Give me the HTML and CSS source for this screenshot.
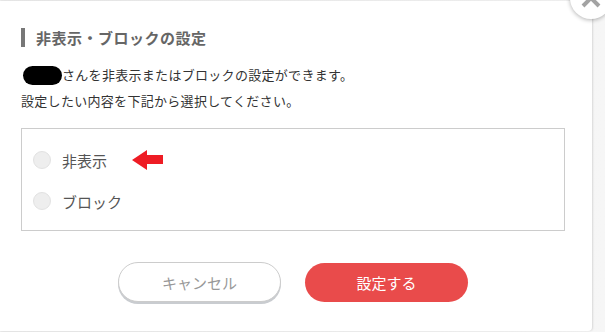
FILE: index.html
```html
<!DOCTYPE html>
<html lang="ja">

<head>
    <meta charset="UTF-8" />
    <meta name="viewport" content="width=device-width, initial-scale=1.0" />
    <title>非表示・ブロックの設定</title>
    <link rel="stylesheet" href="styles.css">
</head>

<body>

    <div class="modal">
        <div class="close-btn">
            <svg width="20" height="20" viewBox="0 0 20 20">
                <path d="M2 2 L18 18 M18 2 L2 18" stroke="#a3a3a3" stroke-width="4" fill="none" />
            </svg>
        </div>

        <h2 class="modal-title">非表示・ブロックの設定</h2>

        <p class="modal-text">
            <span class="masked"></span>さんを非表示またはブロックの設定ができます。<br>
            設定したい内容を下記から選択してください。
        </p>

        <div class="options">
            <label class="option">
                <span class="radio"></span>
                <span class="option-label">非表示</span>
                <svg class="pointer" width="31" height="20" viewBox="0 0 31 20">
                    <polygon points="0,10 15,0 15,5 31,5 31,14 15,14 15,20" fill="#ee1c24" />
                </svg>
            </label>
            <label class="option">
                <span class="radio"></span>
                <span class="option-label">ブロック</span>
            </label>
        </div>

        <div class="actions">
            <button class="btn btn-cancel">キャンセル</button>
            <button class="btn btn-submit">設定する</button>
        </div>
    </div>

</body>

</html>
```

FILE: styles.css
```css
body {
    margin: 0;
    font-family: "Noto Sans CJK JP", "Noto Sans", sans-serif;
    background: linear-gradient(to right, #ececec, #f6f6f6);
    height: 332px;
    overflow: hidden;
}

.modal {
    position: relative;
    box-sizing: border-box;
    width: 592px;
    height: 330px;
    margin-top: 1px;
    padding: 27px 27px 0 21px;
    background: #fff;
    border-radius: 0 0 4px 0;
    box-shadow: 1px 0 2px rgba(0, 0, 0, 0.12);
}

.close-btn {
    position: absolute;
    top: -24px;
    right: -20px;
    width: 42px;
    height: 42px;
    border-radius: 50%;
    background: #fff;
    box-shadow: 0 1px 4px rgba(0, 0, 0, 0.3);
    display: flex;
    justify-content: center;
    align-items: center;
}

.modal-title {
    margin: 0;
    padding-left: 11px;
    border-left: 4px solid #777;
    font-size: 15px;
    font-weight: bold;
    letter-spacing: 0.5px;
    line-height: 19px;
    color: #666;
}

.modal-text {
    margin: 15px 0 0;
    font-size: 13px;
    line-height: 26px;
    letter-spacing: 0.3px;
    color: #333;
}

.masked {
    display: inline-block;
    width: 39px;
    height: 19px;
    margin-left: 2px;
    border-radius: 10px;
    background: #000;
    vertical-align: -5px;
}

.options {
    margin-top: 14px;
    width: 544px;
    box-sizing: border-box;
    border: 1px solid #ccc;
    padding: 19px 11px 17px;
    display: flex;
    flex-direction: column;
    gap: 17px;
}

.option {
    display: flex;
    align-items: center;
    height: 24px;
}

.radio {
    width: 18px;
    height: 18px;
    box-sizing: border-box;
    border-radius: 50%;
    background: #eee;
    border: 1px solid #e2e2e2;
}

.option-label {
    margin-left: 11px;
    font-size: 15px;
    color: #555;
}

.pointer {
    margin-left: 25px;
}

.actions {
    margin-top: 31px;
    display: flex;
    justify-content: center;
    align-items: flex-start;
    gap: 24px;
}

.btn {
    width: 163px;
    height: 40px;
    border-radius: 20px;
    font-family: inherit;
    font-size: 15px;
    cursor: pointer;
}

.btn-cancel {
    background: #fff;
    color: #999;
    border: 1px solid #ccc;
    box-shadow: 0 2px 0 #c9ccd0;
}

.btn-submit {
    margin-top: 1px;
    height: 39px;
    background: #e94b4b;
    color: #fff;
    border: none;
}
```
